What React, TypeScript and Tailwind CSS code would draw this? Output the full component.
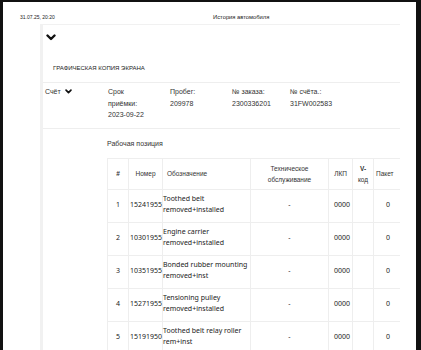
import React from "react";

const rows = [
  { n: 1, num: "15241955", a: "Toothed belt", b: "removed+installed" },
  { n: 2, num: "10301955", a: "Engine carrier", b: "removed+installed" },
  { n: 3, num: "10351955", a: "Bonded rubber mounting", b: "removed+inst" },
  { n: 4, num: "15271955", a: "Tensioning pulley", b: "removed+installed" },
  { n: 5, num: "15191950", a: "Toothed belt relay roller", b: "rem+inst" },
];

function Chevron({ className }: { className?: string }) {
  return (
    <svg viewBox="0 0 10 7" className={className}>
      <polyline points="1.5,1.5 5,5 8.5,1.5" fill="none" stroke="#111" strokeWidth="2.4" strokeLinecap="round" strokeLinejoin="round" />
    </svg>
  );
}

const sans = "font-['Liberation_Sans',Arial,sans-serif]";
const noto = "font-['Noto_Sans',sans-serif]";

export default function App() {
  return (
    <div className="h-[350px] w-[421px] overflow-hidden bg-[#111] pl-[3px] pr-[5px] pt-[2px]">
      <div className={`h-[400px] bg-white pt-[12px] ${sans}`}>
        {/* print header */}
        <div className="flex h-[7px] items-center leading-none text-[#222]">
          <span className="w-[210px] pl-[17px] text-[5px]">31.07.25, 20:20</span>
          <span className="text-[5.8px]">История автомобиля</span>
        </div>

        <div className="ml-[37px] mt-[3px] w-[360px] overflow-hidden border-l-[3px] border-t border-[#f1f1f1]">
          <div className="border-b border-[#eee] pb-[10px] pl-[3px] pt-[9px]">
            <Chevron className="h-[7px] w-[10px]" />
            <div className="mt-[23px] pl-[7px] text-[6px] leading-[8px] text-[#222]">
              ГРАФИЧЕСКАЯ КОПИЯ ЭКРАНА
            </div>
          </div>

          <div className="flex border-b border-[#eee] pb-[7px] pl-[2px] pt-[3px] text-[7px] leading-[11.5px] text-[#333]">
            <div className="flex w-[63px] items-center gap-[4px] self-start">
              <span>Счёт</span>
              <Chevron className="h-[5px] w-[7px]" />
            </div>
            <div className="w-[62px]">
              Срок
              <br />
              приёмки:
              <br />
              2023-09-22
            </div>
            <div className="w-[62px]">
              Пробег:
              <br />
              209978
            </div>
            <div className="w-[58px]">
              № заказа:
              <br />
              2300336201
            </div>
            <div>
              № счёта.:
              <br />
              31FW002583
            </div>
          </div>

          <div className="pl-[64px] pt-[10px]">
            <div className="text-[7px] leading-[10px] text-[#333]">Рабочая позиция</div>
            <table className="mt-[9px] w-[300px] table-fixed border-collapse border border-[#eee] text-[6.5px] text-[#333]">
              <colgroup>
                <col className="w-[21px]" />
                <col className="w-[34px]" />
                <col className="w-[88px]" />
                <col className="w-[78px]" />
                <col className="w-[24px]" />
                <col className="w-[21px]" />
                <col className="w-[34px]" />
              </colgroup>
              <thead>
                <tr className="h-[31px] leading-[11px]">
                  <th className="border border-[#eee] text-center font-bold">#</th>
                  <th className="border border-[#eee] text-center font-normal">Номер</th>
                  <th className="border border-[#eee] pl-[4px] text-left font-normal">Обозначение</th>
                  <th className="border border-[#eee] text-center font-normal">
                    Техническое
                    <br />
                    обслуживание
                  </th>
                  <th className="border border-[#eee] text-center font-normal">ЛКП</th>
                  <th className="border border-[#eee] text-center font-normal">
                    <span className="font-bold">V-</span>
                    <br />
                    код
                  </th>
                  <th className="border border-[#eee] pl-[2px] text-left font-normal">Пакет</th>
                </tr>
              </thead>
              <tbody className={`${noto} text-[7px] leading-[10.5px] text-[#222]`}>
                {rows.map((r) => (
                  <tr key={r.n} className="h-[33px]">
                    <td className="border border-[#eee] text-center">{r.n}</td>
                    <td className="whitespace-nowrap border border-[#eee] pl-px">{r.num}</td>
                    <td className="whitespace-nowrap border border-[#eee] pb-[2px]">
                      {r.a}
                      <br />
                      {r.b}
                    </td>
                    <td className="border border-[#eee] text-center">-</td>
                    <td className="border border-[#eee] pl-[5px]">0000</td>
                    <td className="border border-[#eee]"></td>
                    <td className="border border-[#eee] pl-[12px]">0</td>
                  </tr>
                ))}
              </tbody>
            </table>
          </div>
        </div>
      </div>
    </div>
  );
}
